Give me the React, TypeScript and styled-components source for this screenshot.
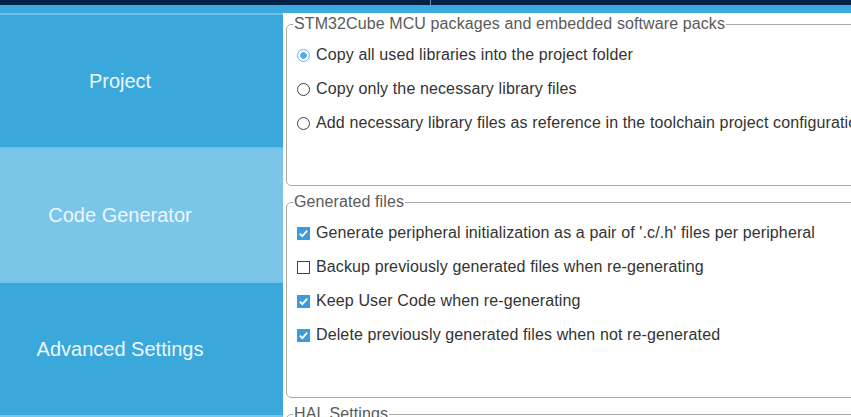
import React from 'react'
import styled, { createGlobalStyle } from 'styled-components'

const GlobalStyle = createGlobalStyle`
  html, body {
    margin: 0;
    padding: 0;
    overflow: hidden;
    background: #fff;
  }
  body {
    font-family: "Liberation Sans", Arial, sans-serif;
  }
`

const Page = styled.div`
  width: 851px;
  height: 417px;
  display: flex;
  flex-direction: column;
  overflow: hidden;
`

const TopBar = styled.div`
  height: 5px;
  display: flex;
  background: #04214a;
`

const TopSegment = styled.div`
  width: 430px;
  border-right: 1px solid #7f8ea4;
`

const Strip = styled.div`
  height: 8px;
  background: #3aa9dc;
`

const Body = styled.div`
  flex: 1;
  display: flex;
  min-height: 0;
`

const Sidebar = styled.nav`
  width: 283px;
  flex: none;
  display: flex;
  flex-direction: column;
  background: #3aa8db;
  border-bottom: 2px solid #78c5ea;
`

const Tab = styled.div<{ $active?: boolean }>`
  height: 132px;
  flex: none;
  display: flex;
  align-items: center;
  justify-content: center;
  padding-right: 43px;
  border-top: 2px solid #6ec0e8;
  background: ${(p) => (p.$active ? '#7bc5e9' : '#3aa8db')};
  color: #eef7fc;
  font-size: 20px;
`

const Content = styled.main`
  flex: 1;
  min-width: 0;
  overflow: hidden;
  background: #fff;
  padding: 3px 0 0 3px;
`

const Group = styled.fieldset<{ $pad: number }>`
  width: 700px;
  margin: 0 0 8px 0;
  padding: 6px 0 ${(p) => p.$pad}px 10px;
  border: 1px solid #a9a9a9;
  border-radius: 5px;
`

const Legend = styled.legend`
  margin-left: -4px;
  padding: 0 1px 0 1px;
  font-size: 16px;
  line-height: 16px;
  letter-spacing: 0.1px;
  color: #5a5a5a;
`

const Row = styled.label`
  height: 34px;
  display: flex;
  align-items: center;
  gap: 6px;
  font-size: 16px;
  letter-spacing: 0.12px;
  color: #333;
  white-space: nowrap;
`

const Radio = styled.span<{ $on?: boolean }>`
  width: 13px;
  height: 13px;
  flex: none;
  box-sizing: border-box;
  border-radius: 50%;
  border: 1px solid ${(p) => (p.$on ? '#6ab4e8' : '#444')};
  background: ${(p) => (p.$on ? 'radial-gradient(circle, #56ade6 0 3px, #fff 3.5px)' : '#fff')};
`

const Box = styled.span<{ $on?: boolean }>`
  width: 13px;
  height: 13px;
  flex: none;
  box-sizing: border-box;
  display: flex;
  align-items: center;
  justify-content: center;
  border: 1px solid ${(p) => (p.$on ? '#3c9bdb' : '#444')};
  background: ${(p) => (p.$on ? '#3c9bdb' : '#fff')};
`

const Check = () => (
  <svg width="11" height="11" viewBox="0 0 11 11">
    <path d="M1.8 5.6 L4.3 8.1 L9.2 2.6" fill="none" stroke="#fff" strokeWidth="1.8" />
  </svg>
)

const packOptions = [
  { text: 'Copy all used libraries into the project folder', on: true },
  { text: 'Copy only the necessary library files', on: false },
  { text: 'Add necessary library files as reference in the toolchain project configuration file', on: false },
]

const fileOptions = [
  { text: "Generate peripheral initialization as a pair of '.c/.h' files per peripheral", on: true },
  { text: 'Backup previously generated files when re-generating', on: false },
  { text: 'Keep User Code when re-generating', on: true },
  { text: 'Delete previously generated files when not re-generated', on: true },
]

export default function App() {
  return (
    <>
      <GlobalStyle />
      <Page>
        <TopBar>
          <TopSegment />
        </TopBar>
        <Strip />
        <Body>
          <Sidebar>
            <Tab>Project</Tab>
            <Tab $active>Code Generator</Tab>
            <Tab>Advanced Settings</Tab>
          </Sidebar>
          <Content>
            <Group $pad={45}>
              <Legend>STM32Cube MCU packages and embedded software packs</Legend>
              {packOptions.map((o) => (
                <Row key={o.text}>
                  <Radio $on={o.on} />
                  {o.text}
                </Row>
              ))}
            </Group>
            <Group $pad={45}>
              <Legend>Generated files</Legend>
              {fileOptions.map((o) => (
                <Row key={o.text}>
                  <Box $on={o.on}>{o.on && <Check />}</Box>
                  {o.text}
                </Row>
              ))}
            </Group>
            <Group $pad={45}>
              <Legend>HAL Settings</Legend>
            </Group>
          </Content>
        </Body>
      </Page>
    </>
  )
}
